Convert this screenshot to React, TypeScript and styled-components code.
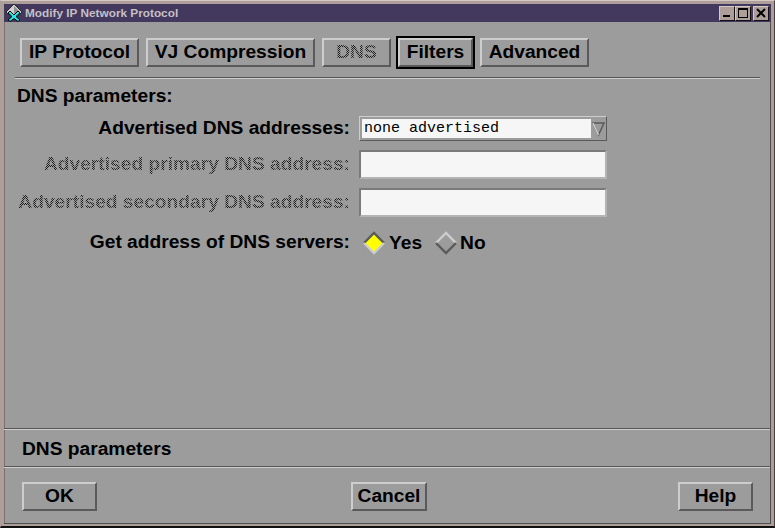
import React from "react";
import styled, { createGlobalStyle, css } from "styled-components";

const GlobalStyle = createGlobalStyle`
  html, body {
    margin: 0;
    padding: 0;
    background: #000;
  }
  * {
    box-sizing: border-box;
  }
`;

const dither = css`
  color: transparent;
  background-image: conic-gradient(#1c1c1c 25%, transparent 0 50%, #1c1c1c 0 75%, transparent 0);
  background-size: 2px 2px;
  -webkit-background-clip: text;
  background-clip: text;
`;

const Frame = styled.div`
  width: 775px;
  height: 528px;
  display: flex;
  flex-direction: column;
  background: #ad9e99;
  border-top: 1px solid #d6c9c4;
  border-left: 1px solid #ad9e99;
  border-right: 1px solid #4a3f3c;
  border-bottom: 2px solid #111;
  padding: 3px 3px 2px 3px;
`;

const TitleBar = styled.div`
  height: 18px;
  flex: none;
  display: flex;
  align-items: center;
  background: #43385e;
  padding: 0 2px 0 2px;
`;

const TitleText = styled.span`
  margin-left: 1px;
  flex: 1;
  font: bold 11.8px "Liberation Sans", Arial, sans-serif;
  color: #c6c0c6;
  white-space: nowrap;
`;

const WinButton = styled.div<{ $gap?: number }>`
  width: 16px;
  height: 15px;
  margin-left: ${(p) => p.$gap ?? 0}px;
  display: flex;
  align-items: center;
  justify-content: center;
  background: #ad9e99;
  border: 1px solid;
  border-color: #d6c9c4 #111 #111 #d6c9c4;
`;

const Body = styled.div`
  flex: 1;
  min-height: 0;
  display: flex;
  flex-direction: column;
  background: #9c9c9c;
  border-right: 1px solid #4f4f4f;
  border-bottom: 1px solid #4f4f4f;
  box-shadow: inset 1px 0 0 #7d716d;
`;

const TabRow = styled.div`
  display: flex;
  gap: 7px;
  padding: 16px 0 0 16px;
`;

const BevelButton = styled.button<{ $w: number; $isDefault?: boolean }>`
  width: ${(p) => p.$w}px;
  height: 29px;
  padding: 0 0 2px;
  background: #9c9c9c;
  border: 2px solid;
  border-color: #cdcdcd #5a5a5a #5a5a5a #cdcdcd;
  font: bold 19.2px "Liberation Sans", Arial, sans-serif;
  color: #000;
  white-space: nowrap;
  ${(p) => p.$isDefault && "box-shadow: 0 0 0 2px #000;"}
`;

const OffLabel = styled.span`
  ${dither}
`;

const Rule = styled.div<{ $inset?: boolean }>`
  height: 2px;
  flex: none;
  background: linear-gradient(#565656 50%, #cfcfcf 50%);
  ${(p) => p.$inset && "margin: 10px 10px 0 11px;"}
`;

const SectionTitle = styled.div`
  margin: 6px 0 0 13px;
  height: 21px;
  font: bold 19.2px/21px "Liberation Sans", Arial, sans-serif;
  color: #000;
`;

const FormGrid = styled.div`
  display: grid;
  grid-template-columns: 346px 248px;
  column-gap: 9px;
  margin-top: 10px;
`;

const FieldLabel = styled.div<{ $h: number; $mb: number }>`
  height: ${(p) => p.$h}px;
  margin-bottom: ${(p) => p.$mb}px;
  padding-bottom: 2px;
  display: flex;
  align-items: center;
  justify-content: flex-end;
  font: bold 19.2px "Liberation Sans", Arial, sans-serif;
  color: #000;
  white-space: nowrap;
`;

const DitherText = styled.span`
  ${dither}
`;

const Combo = styled.div`
  height: 25px;
  margin-bottom: 9px;
  display: flex;
  align-items: stretch;
  background: #9c9c9c;
  border: 1px solid;
  border-color: #cdcdcd #5a5a5a #5a5a5a #cdcdcd;
  padding: 2px 0 2px 2px;
`;

const ComboValue = styled.div`
  flex: 1;
  padding-left: 2px;
  background: #f6f6f6;
  font: 15px/19px "Liberation Mono", "DejaVu Sans Mono", monospace;
  color: #000;
`;

const ComboArrow = styled.svg`
  width: 15px;
  height: 19px;
  flex: none;
`;

const TextBox = styled.div<{ $mb: number }>`
  height: 29px;
  margin-bottom: ${(p) => p.$mb}px;
  background: #f6f6f6;
  border: 2px solid;
  border-color: #7a7a7a #b4b4b4 #b4b4b4 #7a7a7a;
`;

const RadioGroup = styled.div`
  height: 26px;
  display: flex;
  align-items: center;
  padding-left: 3px;
  font: bold 19.2px "Liberation Sans", Arial, sans-serif;
  color: #000;
`;

const RadioText = styled.span<{ $gap: number; $lead: number }>`
  margin: 0 ${(p) => p.$gap}px 0 ${(p) => p.$lead}px;
`;

const Footer = styled.div`
  margin-top: auto;
  display: flex;
  flex-direction: column;
`;

const StatusLine = styled.div`
  height: 36px;
  padding: 1px 0 0 18px;
  font: bold 19.2px/36px "Liberation Sans", Arial, sans-serif;
  color: #000;
`;

const ActionRow = styled.div`
  display: flex;
  padding: 14px 17px 12px 18px;
`;

const CancelSlot = styled.div`
  margin: 0 auto 0 254px;
`;

const Logo = () => (
  <svg width="18" height="18" viewBox="0 0 18 18">
    <path d="M8 0 L16 8 L8 16 L0 8 Z" fill="#cfcfcf" stroke="#2a2a2a" strokeWidth="1" />
    <path d="M8 2 L14 8 L8 14 Z" fill="#8f8f8f" />
    <path d="M4 7 L8 11 L12 7 L14 9 L10 12.5 L14 16 L12 17.5 L8 14.5 L4 17.5 L2 16 L6 12.5 L2 9 Z" fill="#27e8e8" stroke="#000" strokeWidth="1" />
  </svg>
);

const Diamond = ({ on }: { on?: boolean }) => (
  <svg width="24" height="24" viewBox="0 0 24 24">
    <path d="M12 1.5 L22.5 12 L12 22.5 L1.5 12 Z" fill={on ? "#ffff00" : "#9c9c9c"} />
    <path d="M2 12 L12 2 L22 12" fill="none" stroke={on ? "#5a5a5a" : "#cdcdcd"} strokeWidth="2.4" />
    <path d="M2 12 L12 22 L22 12" fill="none" stroke={on ? "#cdcdcd" : "#5a5a5a"} strokeWidth="2.4" />
  </svg>
);

export default function App() {
  return (
    <>
      <GlobalStyle />
      <Frame>
        <TitleBar>
          <Logo />
          <TitleText>Modify IP Network Protocol</TitleText>
          <WinButton>
            <svg width="10" height="10" viewBox="0 0 10 10">
              <rect x="1" y="7" width="7" height="2" fill="#000" />
            </svg>
          </WinButton>
          <WinButton>
            <svg width="10" height="10" viewBox="0 0 10 10">
              <rect x="0.5" y="0.5" width="9" height="9" fill="none" stroke="#000" />
              <rect x="0" y="0" width="10" height="2" fill="#000" />
            </svg>
          </WinButton>
          <WinButton $gap={2}>
            <svg width="10" height="10" viewBox="0 0 10 10">
              <path d="M1 1 L9 9 M9 1 L1 9" stroke="#000" strokeWidth="2" />
            </svg>
          </WinButton>
        </TitleBar>
        <Body>
          <TabRow>
            <BevelButton $w={119}>IP Protocol</BevelButton>
            <BevelButton $w={169}>VJ Compression</BevelButton>
            <BevelButton $w={69}>
              <OffLabel>DNS</OffLabel>
            </BevelButton>
            <BevelButton $w={75} $isDefault>
              Filters
            </BevelButton>
            <BevelButton $w={109}>Advanced</BevelButton>
          </TabRow>
          <Rule $inset />
          <SectionTitle>DNS parameters:</SectionTitle>
          <FormGrid>
            <FieldLabel $h={25} $mb={9}>
              Advertised DNS addresses:
            </FieldLabel>
            <Combo>
              <ComboValue>none advertised</ComboValue>
              <ComboArrow viewBox="0 0 15 19">
                <path d="M2 4 L13 4 L7.5 16 Z" fill="none" stroke="#5a5a5a" strokeWidth="1.5" />
                <path d="M2 4 L7.5 16" stroke="#cdcdcd" strokeWidth="1.5" />
              </ComboArrow>
            </Combo>
            <FieldLabel $h={29} $mb={9}>
              <DitherText>Advertised primary DNS address:</DitherText>
            </FieldLabel>
            <TextBox $mb={9} />
            <FieldLabel $h={29} $mb={13}>
              <DitherText>Advertised secondary DNS address:</DitherText>
            </FieldLabel>
            <TextBox $mb={13} />
            <FieldLabel $h={26} $mb={0}>
              Get address of DNS servers:
            </FieldLabel>
            <RadioGroup>
              <Diamond on />
              <RadioText $lead={3} $gap={12}>
                Yes
              </RadioText>
              <Diamond />
              <RadioText $lead={2} $gap={0}>
                No
              </RadioText>
            </RadioGroup>
          </FormGrid>
          <Footer>
            <Rule />
            <StatusLine>DNS parameters</StatusLine>
            <Rule />
            <ActionRow>
              <BevelButton $w={75}>OK</BevelButton>
              <CancelSlot>
                <BevelButton $w={76}>Cancel</BevelButton>
              </CancelSlot>
              <BevelButton $w={75}>Help</BevelButton>
            </ActionRow>
          </Footer>
        </Body>
      </Frame>
    </>
  );
}
